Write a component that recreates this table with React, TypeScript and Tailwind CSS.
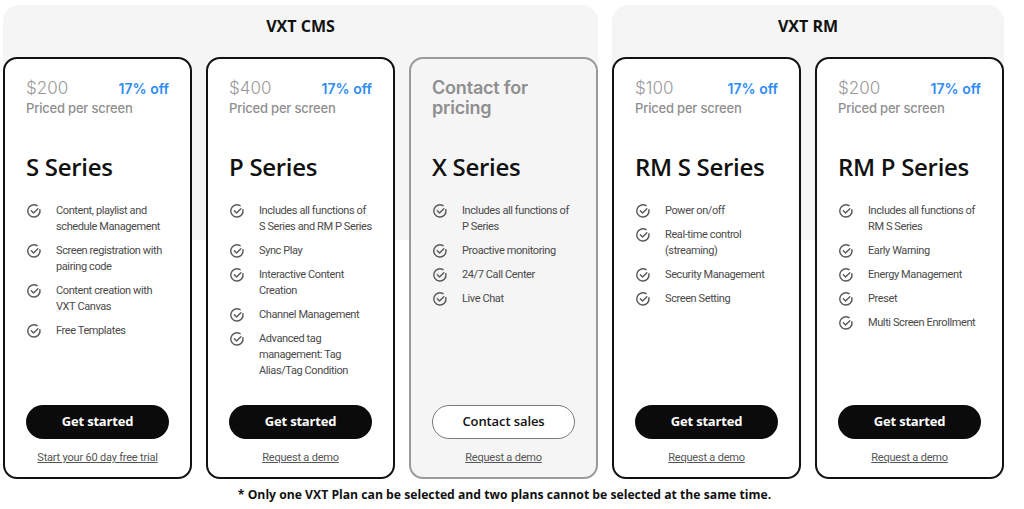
import React from "react";

type Plan = {
  price?: string;
  name: string;
  features: string[];
  link: string;
  contact?: boolean;
};

const cms: Plan[] = [
  {
    price: "$200",
    name: "S Series",
    features: [
      "Content, playlist and schedule Management",
      "Screen registration with pairing code",
      "Content creation with VXT Canvas",
      "Free Templates",
    ],
    link: "Start your 60 day free trial",
  },
  {
    price: "$400",
    name: "P Series",
    features: [
      "Includes all functions of S Series and RM P Series",
      "Sync Play",
      "Interactive Content Creation",
      "Channel Management",
      "Advanced tag management: Tag Alias/Tag Condition",
    ],
    link: "Request a demo",
  },
  {
    name: "X Series",
    features: [
      "Includes all functions of P Series",
      "Proactive monitoring",
      "24/7 Call Center",
      "Live Chat",
    ],
    link: "Request a demo",
    contact: true,
  },
];

const rm: Plan[] = [
  {
    price: "$100",
    name: "RM S Series",
    features: [
      "Power on/off",
      "Real-time control (streaming)",
      "Security Management",
      "Screen Setting",
    ],
    link: "Request a demo",
  },
  {
    price: "$200",
    name: "RM P Series",
    features: [
      "Includes all functions of RM S Series",
      "Early Warning",
      "Energy Management",
      "Preset",
      "Multi Screen Enrollment",
    ],
    link: "Request a demo",
  },
];

function CheckIcon() {
  return (
    <svg
      width="16"
      height="16"
      viewBox="0 0 24 24"
      fill="none"
      stroke="#5a5a5a"
      strokeWidth="2.2"
      strokeLinecap="round"
      strokeLinejoin="round"
      className="shrink-0"
    >
      <path d="M20.9 10.2A9.2 9.2 0 1 1 16.6 4" />
      <path d="M8 11.6l3.3 3.3L17.8 8.6" />
    </svg>
  );
}

function Card({ plan }: { plan: Plan }) {
  const base = plan.contact
    ? "bg-[#f5f5f5] border-[#9a9a9a]"
    : "bg-white border-[#111]";
  return (
    <div
      className={`w-[189px] h-[422px] shrink-0 border-2 rounded-[14px] flex flex-col px-[21px] pt-[19px] pb-[12px] ${base}`}
    >
      {plan.contact ? (
        <div className="font-['Inter',sans-serif] text-[18px] leading-[20px] font-semibold text-[#8f8f8f] h-[40px] tracking-[-0.2px]">
          Contact for
          <br />
          pricing
        </div>
      ) : (
        <div className="h-[40px] font-['Inter',sans-serif]">
          <div className="flex justify-between items-baseline leading-[20px]">
            <span className="text-[17px] font-light text-[#999]">
              {plan.price}
            </span>
            <span className="text-[14px] font-semibold text-[#2e8cf6]">
              17% off
            </span>
          </div>
          <div className="text-[13px] leading-[18px] font-medium text-[#8f8f8f] tracking-[-0.2px]">
            Priced per screen
          </div>
        </div>
      )}

      <h3 className="mt-[34px] text-[24px] leading-[30px] font-semibold text-[#111] font-['Open_Sans',sans-serif] tracking-[-0.3px]">
        {plan.name}
      </h3>

      <ul className="mt-[21px] flex flex-col gap-[8px] flex-1">
        {plan.features.map((f) => (
          <li key={f} className="flex gap-[14px] items-start">
            <CheckIcon />
            <span className="text-[11px] leading-[16px] text-[#4a4a4a] font-['Roboto',sans-serif] tracking-[-0.4px]">
              {f}
            </span>
          </li>
        ))}
      </ul>

      {plan.contact ? (
        <button className="h-[34px] w-full rounded-full border border-[#7a7a7a] bg-white text-[13px] font-semibold text-[#111] font-['Open_Sans',sans-serif] tracking-[-0.1px]">
          Contact sales
        </button>
      ) : (
        <button className="h-[34px] w-full rounded-full bg-[#0b0b0b] text-[13px] font-bold text-white font-['Open_Sans',sans-serif] tracking-[-0.2px]">
          Get started
        </button>
      )}
      <a
        href="#"
        className="mt-[12px] text-center text-[11px] leading-[14px] text-[#555] underline font-['Roboto',sans-serif] tracking-[-0.2px]"
      >
        {plan.link}
      </a>
    </div>
  );
}

function Group({ title, plans }: { title: string; plans: Plan[] }) {
  return (
    <div className="rounded-[16px] bg-[linear-gradient(#f5f5f5_0,#f5f5f5_235px,#fff_235px)]">
      <div className="h-[52px] pt-[11px] text-center text-[16px] leading-[20px] font-bold text-[#111] font-['Open_Sans',sans-serif]">
        {title}
      </div>
      <div className="flex gap-[14px]">
        {plans.map((p) => (
          <Card key={p.name} plan={p} />
        ))}
      </div>
    </div>
  );
}

export default function App() {
  return (
    <div className="w-[1024px] h-[509px] bg-white pl-[3px] pt-[5px]">
      <div className="flex gap-[14px]">
        <Group title="VXT CMS" plans={cms} />
        <Group title="VXT RM" plans={rm} />
      </div>
      <p className="w-[1003px] mt-[7px] text-center text-[12.2px] leading-[18px] font-bold text-[#111] font-['Open_Sans',sans-serif]">
        * Only one VXT Plan can be selected and two plans cannot be selected at
        the same time.
      </p>
    </div>
  );
}
